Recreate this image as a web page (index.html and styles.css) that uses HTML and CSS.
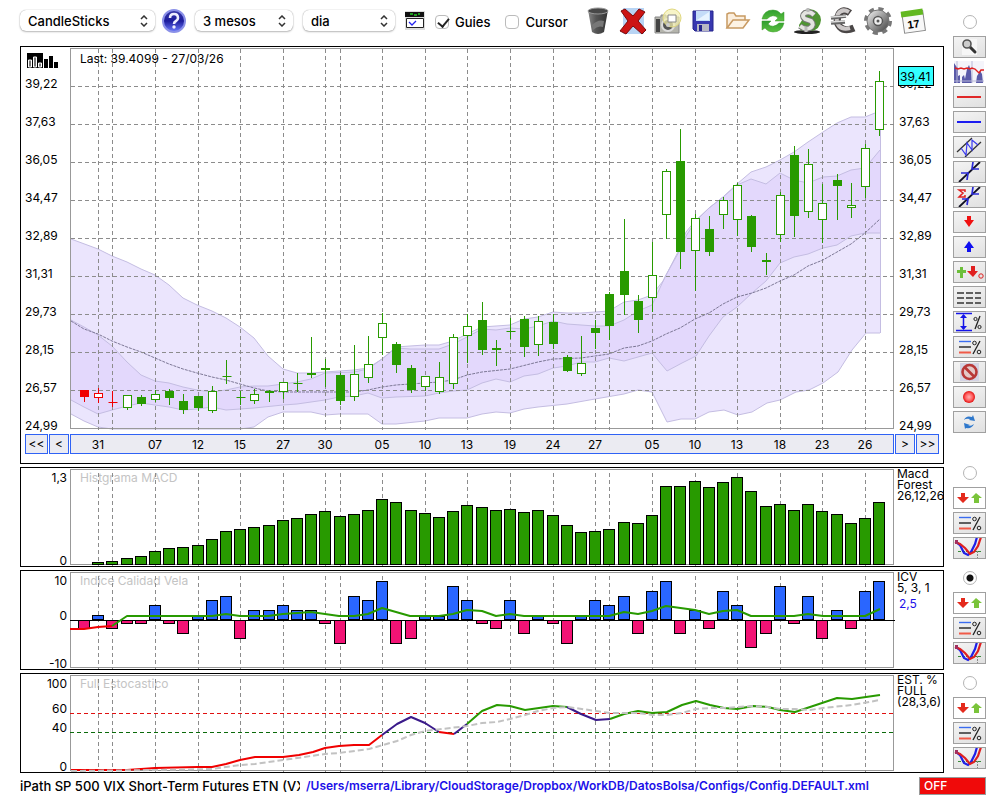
FILE: index.html
```
<!DOCTYPE html>
<html lang="ca">
<head>
    <meta charset="UTF-8">
    <meta name="viewport" content="width=device-width, initial-scale=1.0">
    <title>iPath SP 500 VIX</title>
    <link rel="stylesheet" href="styles.css">
</head>
<body>

<!-- icons -->
<svg class="defs" aria-hidden="true">
    <defs>
        <linearGradient id="g-blue" x1="0" y1="0" x2="0" y2="1">
            <stop offset="0" stop-color="#3a3aa8"/><stop offset=".5" stop-color="#1c1c9c"/><stop offset="1" stop-color="#6f7dff"/>
        </linearGradient>
        <linearGradient id="g-dark" x1="0" y1="0" x2="1" y2="0">
            <stop offset="0" stop-color="#888"/><stop offset=".4" stop-color="#555"/><stop offset="1" stop-color="#333"/>
        </linearGradient>
        <linearGradient id="g-metal" x1="0" y1="0" x2="1" y2="1">
            <stop offset="0" stop-color="#ddd"/><stop offset=".5" stop-color="#999"/><stop offset="1" stop-color="#555"/>
        </linearGradient>
        <linearGradient id="g-green" x1="0" y1="0" x2="0" y2="1">
            <stop offset="0" stop-color="#2f9e2f"/><stop offset="1" stop-color="#5cc040"/>
        </linearGradient>
        <radialGradient id="g-red">
            <stop offset="0" stop-color="#ffb0b0"/><stop offset=".6" stop-color="#ff6060"/><stop offset="1" stop-color="#e01010"/>
        </radialGradient>
        <symbol id="i-zoom" viewBox="0 0 31 20">
            <path d="M8 2h15v16H8z" fill="#f6f6f6"/>
            <path d="M16 10l5 5" stroke="#333" stroke-width="3" stroke-linecap="round"/>
            <circle cx="13" cy="7" r="4" fill="#ccc" stroke="#555" stroke-width="1.6"/>
        </symbol>
        <symbol id="i-hist" viewBox="0 0 31 22">
            <path d="M0 0h30v22H0z" fill="#f4f4fa"/>
            <path d="M0 22V2l2 3 2 2v8l2-1v8zM8 22v-6l2-2 1 4 2-10 2-4 2 6 1 12zM22 22l1-7 2-3 1-2 2 3 1 9z" fill="#5a5aa8"/>
            <path d="M3 0v22M18 0v22M0 20h30" stroke="#b8b8d8"/>
            <path d="M1 7l3 1 3-1 3 1 3-1 3 1 2-1 3 1 2 2 2 2 2-3 3 0" fill="none" stroke="#e02020" stroke-width="1.4"/>
        </symbol>
        <symbol id="i-redline" viewBox="0 0 31 20"><path d="M3 10h24" stroke="#e02828" stroke-width="2"/></symbol>
        <symbol id="i-blueline" viewBox="0 0 31 20"><path d="M3 10h24" stroke="#1c1cf0" stroke-width="2"/></symbol>
        <symbol id="i-channel" viewBox="0 0 31 20">
            <path d="M3 15L18 1M11 20L27 5" stroke="#333" stroke-width="1.3"/>
            <path d="M7 11l5 7 1-12 5 7 0-10 6 5" fill="none" stroke="#3a3af0" stroke-width="1.2"/>
        </symbol>
        <symbol id="i-cross" viewBox="0 0 31 20">
            <path d="M5 20L26 0" stroke="#112" stroke-width="1.8"/>
            <path d="M7 11l7 0-1 7M25 7l-7 0 1-7" fill="none" stroke="#2a2ad8" stroke-width="1.700"/>
        </symbol>
        <symbol id="i-sigma" viewBox="0 0 31 20">
            <path d="M5 20L26 0" stroke="#112" stroke-width="1.8"/>
            <path d="M8 12l6 0-1 6M25 7l-7 0 1-7" fill="none" stroke="#2a2ad8" stroke-width="1.700"/>
            <path d="M11 5V3H5l4 3-4 4h6V8" fill="none" stroke="#e02020" stroke-width="1.5"/>
        </symbol>
        <symbol id="i-down" viewBox="0 0 31 20"><path d="M13 4h4v4h3l-5 7-5-7h3z" fill="#f01010"/></symbol>
        <symbol id="i-up" viewBox="0 0 31 20"><path d="M13 15h4v-4h3l-5-7-5 7h3z" fill="#1010f0"/></symbol>
        <symbol id="i-add" viewBox="0 0 31 20">
            <path d="M6 5h3v3h3v3H9v5H6v-5H3V8h3z" fill="#6cbf3a"/>
            <path d="M17 4h4v5h3l-5 6-6-6h4z" fill="#e02020"/>
            <circle cx="27" cy="14" r="2.2" fill="none" stroke="#e02020"/>
        </symbol>
        <symbol id="i-dashes" viewBox="0 0 31 20">
            <path d="M3 6h7M12 6h7M21 6h6M3 11h7M12 11h7M21 11h6M3 16h7M12 16h7M21 16h6" stroke="#333" stroke-width="1.6"/>
        </symbol>
        <symbol id="i-range" viewBox="0 0 31 20">
            <path d="M2 1.500h16M2 18.500h16M9.500 3v14" stroke="#1414e8" stroke-width="1.5"/>
            <path d="M6 6l3.500-4L13 6zM6 14l3.500 4 3.500-4z" fill="#1414e8"/>
            <path d="M26 4l-5 13" stroke="#222" stroke-width="1.3"/>
            <circle cx="21.500" cy="7" r="1.600" fill="none" stroke="#222"/><circle cx="25.500" cy="15" r="1.600" fill="none" stroke="#222"/>
        </symbol>
        <symbol id="i-levels" viewBox="0 0 31 20">
            <path d="M5 4.500h12" stroke="#3a6cf0" stroke-width="1.4"/>
            <path d="M5 10h12" stroke="#222" stroke-width="1.4"/>
            <path d="M5 15.500h12" stroke="#f05a48" stroke-width="2"/>
            <path d="M26 4l-7 13" stroke="#222" stroke-width="1.3"/>
            <circle cx="20.500" cy="6" r="1.800" fill="none" stroke="#222"/><circle cx="25" cy="15" r="1.800" fill="none" stroke="#222"/>
        </symbol>
        <symbol id="i-forbid" viewBox="0 0 31 20">
            <path d="M6 1h19v18H6z" fill="#d4d4e4"/>
            <circle cx="15.500" cy="10" r="7" fill="#e4c8c8" stroke="#b83838" stroke-width="2.600"/>
            <path d="M10.500 5l10 10" stroke="#b83838" stroke-width="2.600"/>
        </symbol>
        <symbol id="i-record" viewBox="0 0 31 20"><circle cx="15" cy="10" r="6" fill="url(#g-red)"/></symbol>
        <symbol id="i-sync" viewBox="0 0 31 20">
            <path d="M10 8q2-5 8-3l1-2 2 6-6-1 1-1q-4-1-6 1zM20 12q-2 5-8 4l-1 1-1-6 6 2-2 1q4 0 6-2z" fill="#2f78cc"/>
        </symbol>
        <symbol id="i-downup" viewBox="0 0 31 20">
            <path d="M7 5h4v4h4l-6 6-6-6h4z" fill="#e42a1c"/>
            <path d="M20 15h5v-5h3l-6-5-5 5h3z" fill="#7ac43a"/>
        </symbol>
        <symbol id="i-vcurve" viewBox="0 0 31 20">
            <path d="M4 13.500h24" stroke="#3a8a3a" stroke-dasharray="3 1"/>
            <path d="M23.500 13v7" stroke="#888" stroke-dasharray="2 1"/>
            <path d="M2 4l4 3 4 8 4 2 3-3 4-8 2-7" fill="none" stroke="#2020e8" stroke-width="2.200"/>
            <path d="M1 4l5 2 5 4 5 6 4-2 4-6 3-9" fill="none" stroke="#e02020" stroke-width="2.200"/>
            <path d="M1 2h3v4H1z" fill="#a03060"/>
        </symbol>
    </defs>
</svg>

<main class="page">
    <form class="toolbar" id="toolbar">
        <label class="pick pick-type">
            <select name="type" aria-label="Tipus"><option>CandleSticks</option></select>
            <svg viewBox="0 0 8 12"><path d="M1 4l3-3 3 3M1 8l3 3 3-3"/></svg>
        </label>
        <button type="button" class="icon help" aria-label="Ajuda">
            <svg viewBox="0 0 24 24">
                <circle cx="12" cy="12" r="11" fill="url(#g-blue)" stroke="#8a90e8" stroke-width="2"/>
                <path d="M8 9q0-4 4-4t4 4q0 2-2 3t-2 3" fill="none" stroke="#eef" stroke-width="2.600"/>
                <circle cx="12" cy="18" r="1.700" fill="#eef"/>
            </svg>
        </button>
        <label class="pick pick-range">
            <select name="range" aria-label="Periode"><option>3 mesos</option></select>
            <svg viewBox="0 0 8 12"><path d="M1 4l3-3 3 3M1 8l3 3 3-3"/></svg>
        </label>
        <label class="pick pick-unit">
            <select name="unit" aria-label="Unitat"><option>dia</option></select>
            <svg viewBox="0 0 8 12"><path d="M1 4l3-3 3 3M1 8l3 3 3-3"/></svg>
        </label>
        <button type="button" class="icon console" aria-label="Play">
            <svg viewBox="0 0 20 20">
                <path d="M0 0h20v19H0z" fill="#ddd"/>
                <path d="M0 1h19v5H0z" fill="#111"/>
                <path d="M5 3h3M9 4h3M13 3h2" stroke="#2c2" stroke-width="1.500"/>
                <path d="M1.500 7.500h17v9h-17z" fill="#fff" stroke="#222"/>
                <path d="M4 11l3 3 4-4" fill="none" stroke="#22e" stroke-width="1.300"/>
            </svg>
        </button>
        <label class="check"><input type="checkbox" name="guides" checked> Guies</label>
        <label class="check"><input type="checkbox" name="cursor"> Cursor</label>
        <div class="actions">
            <button type="button" class="icon" aria-label="Paperera">
                <svg viewBox="0 0 28 28">
                    <path d="M4 3l4 22q6 4 12 0l4-22z" fill="url(#g-dark)"/>
                    <ellipse cx="14" cy="4" rx="10" ry="3" fill="#484848" stroke="#999"/>
                    <path d="M8 18q6-6 12-4l-1 6q-5-2-10 3z" fill="#777"/>
                </svg>
            </button>
            <button type="button" class="icon" aria-label="Esborrar">
                <svg viewBox="0 0 28 28">
                    <path d="M4 1h21v26H4z" fill="#b8d4f4"/>
                    <path d="M2 4l4-2 8 7 6-7 6 3-7 9 8 9-4 4-9-8-7 8-6-3 8-10z" fill="#cc1414" stroke="#7c0a0a"/>
                </svg>
            </button>
            <button type="button" class="icon" aria-label="Captura">
                <svg viewBox="0 0 28 28">
                    <path d="M1 10h6V8h5v2h13v16H1z" fill="#b4b4ac" stroke="#888"/>
                    <path d="M2 12h4v13H2z" fill="#444"/>
                    <circle cx="14" cy="18" r="6" fill="#555" stroke="#ddd" stroke-width="2"/>
                    <circle cx="18" cy="11" r="9" fill="#f4f0b0" fill-opacity=".7" stroke="#e0d880"/>
                    <path d="M14 8h8v7h-8z" fill="#fff" stroke="#888"/>
                    <circle cx="14" cy="18" r="2" fill="#ccc"/>
                </svg>
            </button>
            <button type="button" class="icon" aria-label="Desar">
                <svg viewBox="0 0 28 28">
                    <path d="M4 4h20v20H6l-2-2z" fill="#3838b0" stroke="#24248c"/>
                    <path d="M7 4h14v10H7z" fill="#c4dcf8"/>
                    <path d="M8 13L20 5v8z" fill="#e8f4ff"/>
                    <path d="M8 17h12v7H8z" fill="#b8b8c4"/>
                    <path d="M10 18h3v6h-3z" fill="#24248c"/>
                </svg>
            </button>
            <button type="button" class="icon" aria-label="Obrir">
                <svg viewBox="0 0 28 28">
                    <path d="M3 21V7l2-1h5l2 3h9v4" fill="#fbeedd" stroke="#c89a62" stroke-width="1.500"/>
                    <path d="M3 21l6-8h16l-6 8z" fill="#fdf3e4" stroke="#c89a62" stroke-width="1.500"/>
                </svg>
            </button>
            <button type="button" class="icon" aria-label="Refrescar">
                <svg viewBox="0 0 28 28">
                    <path d="M3 12q2-9 11-9 5 0 8 4l3-2v9h-9l3-3q-5-5-11 1z" fill="url(#g-green)" stroke="#3a9a2a" stroke-width=".5"/>
                    <path d="M25 16q-2 9-11 9-5 0-8-4l-3 2v-9h9l-3 3q5 5 11-1z" fill="url(#g-green)" stroke="#3a9a2a" stroke-width=".5"/>
                </svg>
            </button>
            <button type="button" class="icon" aria-label="Dolar">
                <svg viewBox="0 0 28 28">
                    <ellipse cx="13" cy="25" rx="13" ry="2" fill="#222"/>
                    <path d="M15 2q11 1 12 11-1 10-10 11H8q-3-2-3-6z" fill="#4f9432"/>
                    <path d="M20 8q-4-4-9-2-4 3 0 6l6 2q4 4-1 7-5 2-10-2" fill="none" stroke="#777" stroke-width="6"/>
                    <path d="M20 8q-4-4-9-2-4 3 0 6l6 2q4 4-1 7-5 2-10-2" fill="none" stroke="#e4e4e0" stroke-width="4"/>
                    <path d="M14 1v4M12 20v5" stroke="#bbb" stroke-width="3"/>
                </svg>
            </button>
            <button type="button" class="icon" aria-label="Euro">
                <svg viewBox="0 0 28 28">
                    <path d="M21 6q-7-5-11 1-4 8 1 13 5 5 14 1" fill="none" stroke="#4a4646" stroke-width="7"/>
                    <path d="M20 5q-7-4-11 2-3 7 1 12 4 4 11 2" fill="none" stroke="#ccc8c8" stroke-width="4"/>
                    <path d="M2 11l15-2M2 16l14-1" stroke="#666" stroke-width="3.500"/>
                    <path d="M2 10l15-1M2 15l14-1" stroke="#ddd" stroke-width="1.500"/>
                </svg>
            </button>
            <button type="button" class="icon" aria-label="Configurar">
                <svg viewBox="0 0 28 28">
                    <circle cx="14" cy="14" r="12" fill="none" stroke="#777" stroke-width="4" stroke-dasharray="5 4.420"/>
                    <circle cx="14" cy="14" r="8" fill="none" stroke="url(#g-metal)" stroke-width="6"/>
                    <circle cx="14" cy="14" r="11" fill="none" stroke="#777"/>
                    <circle cx="14" cy="14" r="4.500" fill="#eee" stroke="#555" stroke-width="1.500"/>
                    <circle cx="14" cy="14" r="1.500" fill="#555"/>
                </svg>
            </button>
            <button type="button" class="icon" aria-label="Calendari">
                <svg viewBox="0 0 28 28">
                    <g transform="rotate(-8 14 14)">
                        <path d="M4 5h21v20H4z" fill="#f8f8f8" stroke="#888"/>
                        <path d="M3 3h22v6H3z" fill="#62b820"/>
                        <text x="14" y="21" class="cal">17</text>
                    </g>
                </svg>
            </button>
        </div>
    </form>

    <section class="panel panel-price">
        <svg id="price" class="chart" viewBox="21 47 922 386"></svg>
        <div class="dates">
            <button type="button" class="wide">&lt;&lt;</button>
            <button type="button">&lt;</button>
            <div class="strip"><svg id="dates" class="chart" viewBox="71 0 822 18"></svg></div>
            <button type="button">&gt;</button>
            <button type="button" class="wide">&gt;&gt;</button>
        </div>
    </section>
    <section class="panel"><svg id="macd" class="chart" viewBox="21 468 922 98"></svg></section>
    <section class="panel"><svg id="icv" class="chart" viewBox="21 571 922 98"></svg></section>
    <section class="panel"><svg id="stoch" class="chart" viewBox="21 674 922 98"></svg></section>

    <aside class="side">
        <div class="tools tools-price">
            <input type="radio" name="panel" aria-label="Preu">
            <button type="button" aria-label="Lupa"><svg><use href="#i-zoom"/></svg></button>
            <button type="button" class="flat" aria-label="Histograma"><svg><use href="#i-hist"/></svg></button>
            <button type="button" aria-label="Linia vermella"><svg><use href="#i-redline"/></svg></button>
            <button type="button" aria-label="Linia blava"><svg><use href="#i-blueline"/></svg></button>
            <button type="button" aria-label="Canal"><svg><use href="#i-channel"/></svg></button>
            <button type="button" aria-label="Creuament"><svg><use href="#i-cross"/></svg></button>
            <button type="button" aria-label="Sumatori"><svg><use href="#i-sigma"/></svg></button>
            <button type="button" aria-label="Avall"><svg><use href="#i-down"/></svg></button>
            <button type="button" aria-label="Amunt"><svg><use href="#i-up"/></svg></button>
            <button type="button" aria-label="Afegir"><svg><use href="#i-add"/></svg></button>
            <button type="button" aria-label="Graella"><svg><use href="#i-dashes"/></svg></button>
            <button type="button" aria-label="Rang"><svg><use href="#i-range"/></svg></button>
            <button type="button" aria-label="Nivells"><svg><use href="#i-levels"/></svg></button>
            <button type="button" aria-label="Treure"><svg><use href="#i-forbid"/></svg></button>
            <button type="button" aria-label="Gravar"><svg><use href="#i-record"/></svg></button>
            <button type="button" aria-label="Sincronitzar"><svg><use href="#i-sync"/></svg></button>
        </div>
        <div class="tools">
            <input type="radio" name="panel" aria-label="MACD">
            <button type="button" class="white" aria-label="Moure"><svg><use href="#i-downup"/></svg></button>
            <button type="button" aria-label="Nivells"><svg><use href="#i-levels"/></svg></button>
            <button type="button" aria-label="Corba"><svg><use href="#i-vcurve"/></svg></button>
        </div>
        <div class="tools">
            <input type="radio" name="panel" aria-label="ICV" checked>
            <button type="button" class="white" aria-label="Moure"><svg><use href="#i-downup"/></svg></button>
            <button type="button" aria-label="Nivells"><svg><use href="#i-levels"/></svg></button>
            <button type="button" aria-label="Corba"><svg><use href="#i-vcurve"/></svg></button>
        </div>
        <div class="tools">
            <input type="radio" name="panel" aria-label="Estocastic">
            <button type="button" class="white" aria-label="Moure"><svg><use href="#i-downup"/></svg></button>
            <button type="button" aria-label="Nivells"><svg><use href="#i-levels"/></svg></button>
            <button type="button" aria-label="Corba"><svg><use href="#i-vcurve"/></svg></button>
        </div>
    </aside>

    <footer class="status">
        <span class="name">iPath SP 500 VIX Short-Term Futures ETN (VXX)</span>
        <a href="#">/Users/mserra/Library/CloudStorage/Dropbox/WorkDB/DatosBolsa/Configs/Config.DEFAULT.xml</a>
        <span class="off">OFF</span>
    </footer>
</main>

<script src="chart.js"></script>
</body>
</html>
```
FILE: styles.css
```
* {
    box-sizing: border-box;
}

body {
    margin: 0;
    background: #fff;
    color: #000;
    font-family: Inter, "Liberation Sans", sans-serif;
    font-size: 13px;
}

.defs {
    position: absolute;
    width: 0;
    height: 0;
}

.page {
    display: grid;
    grid-template-columns: 1fr 33px;
    grid-template-rows: 43px auto auto auto auto auto;
    column-gap: 9px;
    row-gap: 3px;
    padding: 0 14px 0 20px;
}

/* toolbar */
.toolbar {
    display: flex;
    align-items: center;
    padding-bottom: 2px;
    font-weight: 500;
}

.pick {
    position: relative;
    height: 21px;
    margin-right: 10px;
}

.pick select {
    appearance: none;
    width: 100%;
    height: 21px;
    padding: 0 8px;
    border: 0;
    border-radius: 6px;
    background: #fff;
    box-shadow: 0 0 1px rgba(0, 0, 0, .4), 0 1px 2px rgba(0, 0, 0, .25);
    color: #000;
    font: inherit;
}

.pick svg {
    position: absolute;
    right: 7px;
    top: 5px;
    width: 8px;
    height: 12px;
    fill: none;
    stroke: #333;
    stroke-width: 1.5;
    pointer-events: none;
}

.pick-type {
    width: 135px;
    margin-right: 7px;
}

.pick-range {
    width: 98px;
}

.pick-unit {
    width: 92px;
}

.icon {
    display: flex;
    align-items: center;
    justify-content: center;
    padding: 0;
    border: 0;
    background: none;
}

.icon svg {
    width: 28px;
    height: 28px;
}

.help {
    margin-right: 9px;
}

.help svg {
    width: 24px;
    height: 24px;
}

.console svg {
    width: 20px;
    height: 20px;
}

.check {
    display: flex;
    align-items: center;
    gap: 6px;
    margin-left: 10px;
    padding-top: 2px;
}

.check + .check {
    margin-left: 15px;
}

.check input {
    appearance: none;
    width: 14px;
    height: 14px;
    margin: 0;
    border: 1px solid #bbb;
    border-radius: 4px;
    background: #fff;
}

.check input:checked::before {
    content: "";
    display: block;
    width: 5px;
    height: 9px;
    margin: 0 0 0 4px;
    border: solid #222;
    border-width: 0 2px 2px 0;
    transform: rotate(40deg);
}

.actions {
    display: grid;
    grid-template-columns: repeat(10, 35px);
    margin-left: auto;
    margin-right: 14px;
}

.cal {
    font-size: 11px;
    font-weight: 700;
    text-anchor: middle;
}

/* chart panels */
.panel {
    grid-column: 1;
    border: 1px solid #000;
}

.panel-price {
    padding-bottom: 9px;
}

.chart {
    display: block;
    width: 100%;
    font-size: 12px;
}

.dates {
    display: flex;
    gap: 1px;
    margin-top: 1px;
    padding: 0 4px;
}

.dates button,
.strip {
    height: 20px;
    padding: 0;
    border: 1px solid #2f62f5;
    background: #ebebf2;
    color: #000;
}

.dates button {
    width: 20px;
    font-family: inherit;
    font-size: 12px;
    line-height: 16px;
}

.dates .wide {
    width: 23px;
}

.strip {
    flex: 1;
}

.frame {
    fill: none;
    stroke: #999;
}

.grid {
    fill: none;
    stroke: #8c8c8c;
    stroke-dasharray: 4 3;
}

.band {
    fill: rgba(120, 80, 240, .15);
}

.band-inner {
    fill: rgba(150, 90, 240, .09);
}

.band-line {
    fill: none;
    stroke: #c4bde2;
}

.mean {
    fill: none;
    stroke: #7d7896;
    stroke-dasharray: 3 1;
}

.candle {
    stroke: #289a00;
}

.candle.red {
    stroke: #f00000;
}

.candle .full {
    fill: #289a00;
}

.candle.red .full {
    fill: #f00000;
}

.candle .hollow {
    fill: #fff;
}

.bar {
    fill: #289a00;
    stroke: #000;
}

.bar.pos {
    fill: #2a66ff;
}

.bar.neg {
    fill: #f21375;
}

.axis {
    stroke: #000;
}

.line {
    fill: none;
    stroke-width: 2;
    stroke-linejoin: round;
}

.line.up {
    stroke: #289a00;
}

.line.down {
    stroke: #f00000;
}

.line.mid {
    stroke: #3a1a8a;
}

.line.signal {
    stroke: #c2c2c2;
    stroke-dasharray: 6 3;
}

.level {
    stroke: #e01010;
    stroke-dasharray: 4 3;
}

.level.low {
    stroke: #0b6b0b;
}

.end {
    text-anchor: end;
}

.middle {
    text-anchor: middle;
}

.title {
    fill: #c4c4c4;
}

.value {
    fill: #1c10e8;
}

.badge {
    fill: #3ff;
    stroke: #000;
}

/* side tools */
.side {
    grid-column: 2;
    grid-row: 1 / span 5;
    padding-top: 15px;
}

.tools {
    display: grid;
    gap: 3px;
    margin-bottom: 12px;
}

.tools-price {
    margin-bottom: 33px;
}

.tools:last-child {
    margin-bottom: 0;
}

.tools input {
    appearance: none;
    width: 14px;
    height: 14px;
    margin: 0 auto 4px;
    border: 1px solid #b4b4b4;
    border-radius: 50%;
    background: #fff;
}

.tools input:checked {
    background: radial-gradient(circle, #111 3px, #fff 4px);
}

.tools button {
    height: 22px;
    padding: 0;
    border: 1px solid #a0a0a0;
    background: linear-gradient(160deg, #f4f4f4, #e0e0e0);
}

.tools svg {
    display: block;
    width: 31px;
    height: 20px;
}

.tools .flat {
    border: 0;
    background: none;
}

.tools .flat svg {
    width: 33px;
    height: 22px;
}

.tools .white {
    background: #fff;
}

/* footer */
.status {
    grid-column: 1 / -1;
    display: flex;
    align-items: center;
    height: 19px;
    font-weight: 500;
    white-space: nowrap;
}

.status .name {
    width: 280px;
    overflow: hidden;
}

.status a {
    margin-left: 6px;
    color: #1c10e8;
    font-size: 12px;
    font-weight: 600;
    text-decoration: none;
}

.status .off {
    width: 67px;
    margin-left: auto;
    padding: 0 4px;
    border: 1px solid #999;
    background: #f00a0a;
    color: #fff;
    font-size: 12px;
    line-height: 16px;
}
```
FILE: chart.js
```
var x = function (i) { return Math.round(84 + 14.2 * i) + 0.5; };

// sessions that get a vertical guide, and the label of each one
var guides = [1, 2, 5, 8, 11, 14, 17, 18, 21, 24, 27, 30, 33, 36, 37, 40, 43, 46, 49, 52, 55];
var dates = {1: '31', 5: '07', 8: '12', 11: '15', 14: '27', 17: '30', 21: '05', 24: '10', 27: '13', 30: '19',
    33: '24', 36: '27', 40: '05', 43: '10', 46: '13', 49: '18', 52: '23', 55: '26'};
var prices = ['39,22', '37,63', '36,05', '34,47', '32,89', '31,31', '29,73', '28,15', '26,57', '24,99'];

// kind (F full, H hollow, C cross), high, body top, body bottom, low
var candles = [
    ['F', 390, 390, 397, 402], ['H', 388, 393, 398, 403], ['C', 391, 402, 402, 407], ['H', 395, 395, 408, 410],
    ['F', 395, 397, 404, 406], ['H', 390, 394, 400, 402], ['F', 389, 391, 398, 405], ['F', 394, 401, 410, 414],
    ['F', 396, 396, 408, 411], ['H', 386, 391, 411, 413], ['C', 360, 376, 376, 384], ['C', 391, 397, 397, 405],
    ['H', 389, 394, 401, 404], ['F', 390, 391, 392, 402], ['H', 382, 382, 392, 399], ['C', 373, 383, 383, 392],
    ['F', 337, 373, 374, 378], ['F', 359, 368, 369, 387], ['F', 373, 375, 401, 405], ['H', 345, 374, 397, 401],
    ['H', 336, 364, 378, 383], ['H', 313, 323, 338, 355], ['F', 342, 344, 365, 373], ['F', 365, 368, 390, 393],
    ['H', 376, 376, 387, 391], ['H', 362, 377, 392, 394], ['H', 334, 337, 384, 389], ['H', 314, 326, 336, 363],
    ['F', 302, 320, 350, 355], ['F', 340, 348, 349, 366], ['C', 318, 331, 331, 339], ['F', 316, 319, 347, 357],
    ['H', 316, 321, 345, 356], ['F', 314, 322, 344, 349], ['F', 355, 357, 371, 372], ['H', 336, 363, 374, 376],
    ['F', 320, 328, 333, 349], ['F', 292, 294, 326, 340], ['F', 219, 271, 295, 315], ['F', 295, 301, 320, 333],
    ['H', 242, 275, 298, 312], ['H', 169, 171, 215, 239], ['F', 129, 161, 252, 269], ['H', 214, 218, 251, 291],
    ['F', 216, 229, 252, 256], ['H', 197, 200, 215, 229], ['H', 183, 185, 220, 236], ['F', 215, 216, 247, 252],
    ['F', 253, 260, 261, 275], ['H', 192, 195, 235, 242], ['F', 146, 155, 216, 237], ['H', 149, 164, 212, 218],
    ['H', 184, 203, 220, 243], ['F', 174, 180, 186, 220], ['H', 183, 205, 208, 218], ['H', 144, 148, 187, 198],
    ['H', 71, 81, 130, 136]
];

var outerTop = '71,239 98,249 112,256 127,262 141,269 155,275 169,285 183,298 197,305 212,311 226,318 240,327 254,338 268,356 283,369 297,373 311,373 325,372 339,371 354,370 368,368 382,359 396,347 410,346 425,345 439,345 453,341 467,334 482,327 496,326 510,325 524,319 538,317 553,312 567,313 581,313 595,312 609,311 624,302 638,300 652,295 663,281 680,248 686,232 695,221 709,208 723,197 737,184 751,172 766,167 780,160 794,152 808,142 823,132 837,123 851,117 865,117 880,111';
var outerBottom = '71,414 84,421 98,427 112,429 240,429 254,427 268,417 283,412 311,412 325,415 339,414 368,414 382,424 396,424 425,421 439,418 467,418 482,414 496,412 510,413 524,409 538,407 567,404 595,399 624,394 638,390 652,392 667,422 681,419 695,419 709,412 724,410 738,415 752,412 767,403 780,400 796,392 809,390 823,383 838,372 852,350 866,333 880,333';
var innerTop = '71,320 84,327 98,335 112,346 127,362 141,375 155,381 169,383 183,387 197,390 212,392 226,390 240,387 254,386 268,386 283,384 297,382 311,379 325,373 354,372 368,369 382,359 396,348 410,349 439,349 453,344 467,337 482,329 496,330 510,328 524,329 538,326 553,321 567,324 581,325 595,326 609,326 624,320 638,311 652,305 666,275 680,250 686,236 695,222 709,208 723,197 737,185 751,179 766,184 780,173 794,180 808,183 823,177 837,176 851,170 865,168 880,150';
var innerBottom = '71,400 84,407 98,414 112,410 127,406 141,403 155,405 169,407 183,410 197,409 212,407 226,410 240,409 254,408 283,405 297,404 325,400 339,397 354,396 368,393 382,398 396,397 425,396 439,393 453,391 467,390 482,383 496,379 510,382 524,376 538,374 553,368 567,366 581,362 595,362 609,358 624,361 638,357 652,353 667,371 682,363 696,356 709,336 723,317 737,307 752,293 766,281 780,263 794,257 808,254 823,248 837,245 851,236 865,233 880,233';
var mean = '71,321 84,329 98,334 112,341 127,347 141,352 155,358 169,364 183,369 197,373 212,377 226,380 240,384 254,388 268,391 283,392 354,392 368,390 382,387 396,385 410,384 439,382 453,380 467,375 482,372 510,369 538,362 553,359 581,358 609,354 624,348 638,346 652,341 666,334 680,328 695,319 709,313 723,304 737,297 752,293 766,288 780,281 794,275 808,266 823,260 837,252 851,244 865,233 880,219';

// top of each histogram bar
var macd = [564, 562, 561, 558, 556, 551, 548, 547, 545, 539, 531, 529, 527, 525, 520, 518, 514, 511, 516, 514,
    510, 499, 502, 510, 513, 517, 511, 505, 507, 510, 509, 512, 510, 515, 525, 532, 531, 529, 522, 523, 515,
    486, 486, 481, 487, 482, 477, 491, 506, 504, 510, 504, 511, 514, 523, 518, 502];

var icv = [-8, 5, -8, -3, -3, 15, -3, -13, 4, 20, 24, -18, 10, 10, 15, 10, 10, -3, -23, 24, 20, 39, -23, -18, 4, 4,
    34, 20, -3, -8, 20, -13, 4, -3, -23, 4, 20, 15, 24, -13, 29, 39, -13, 10, -8, 29, 15, -27, -13, 34, -3, 24,
    -18, 10, -8, 29, 39];

function path(d, cls) {
    return '<path class="' + cls + '" d="' + d + '"/>';
}

function poly(points, cls) {
    return '<polyline class="' + cls + '" points="' + points + '"/>';
}

function text(tx, ty, label, cls) {
    return '<text x="' + tx + '" y="' + ty + '" class="' + (cls || '') + '">' + label + '</text>';
}

function rect(rx, ry, w, h, cls) {
    return '<rect x="' + rx + '" y="' + ry + '" width="' + w + '" height="' + h + '" class="' + cls + '"/>';
}

function verticals(top, bottom) {
    return guides.map(function (i) {
        return path('M' + x(i) + ' ' + top + 'V' + bottom, 'grid');
    }).join('');
}

function reversed(points) {
    return points.split(' ').reverse().join(' ');
}

function draw(id, parts) {
    document.getElementById(id).innerHTML = parts.join('');
}

function drawPrice() {
    var out = [];
    out.push('<polygon class="band" points="' + outerTop + ' ' + reversed(outerBottom) + '"/>');
    out.push('<polygon class="band-inner" points="' + innerTop + ' ' + reversed(innerBottom) + '"/>');
    [outerTop, outerBottom, innerTop, innerBottom].forEach(function (p) {
        out.push(poly(p, 'band-line'));
    });
    out.push(path('M880.5 111V333', 'band-line'));
    out.push(rect(70.5, 48.5, 823, 380, 'frame'));
    out.push(verticals(49, 430));
    out.push(poly(mean, 'mean'));
    prices.forEach(function (p, i) {
        var y = 86.5 + 38 * i;
        if (i < 9) {
            out.push(path('M71 ' + y + 'H896', 'grid'));
        }
        out.push(text(25, y + 1.5, p));
        out.push(text(899, y + 1.5, p));
    });
    candles.forEach(function (c, i) {
        var cx = x(i);
        out.push('<g class="candle' + (i < 3 ? ' red' : '') + '">');
        out.push(path('M' + cx + ' ' + c[1] + 'V' + c[4], ''));
        if (c[0] === 'C') {
            out.push(path('M' + (cx - 4) + ' ' + (c[2] + 0.5) + 'h9', ''));
        } else {
            out.push(rect(cx - 4, c[2] + 0.5, 8, Math.max(c[3] - c[2] - 1, 1), c[0] === 'F' ? 'full' : 'hollow'));
        }
        out.push('</g>');
    });
    out.push(rect(898.5, 66.5, 35, 19, 'badge'));
    out.push(text(900, 81, '39,41'));
    out.push(text(80, 63, 'Last: 39.4099 - 27/03/26'));
    // bars logo
    out.push(path('M27 53h16v15H27z', ''));
    out.push('<path d="M28.500 60h3v7h-3zM33.500 57h3v10h-3zM38.500 63h3v4h-3z" fill="#777" stroke="#fff"/>');
    out.push(path('M44 59h4v9h-4zM49 56h4v12h-4zM54 62h4v6h-4z', ''));
    draw('price', out);

    draw('dates', Object.keys(dates).map(function (i) {
        return text(x(+i) - 0.5, 14, dates[i], 'middle');
    }));
}

function drawMacd() {
    var out = [text(80, 482, 'Histgrama MACD', 'title'), rect(70.5, 469.5, 823, 95, 'frame'), verticals(473, 566)];
    macd.forEach(function (top, i) {
        out.push(rect(x(i) - 6, top + 0.5, 11, 564 - top, 'bar'));
    });
    out.push(text(67, 482, '1,3', 'end'), text(67, 565, '0', 'end'));
    out.push(text(897, 478, 'Macd'), text(897, 489, 'Forest'), text(897, 500, '26,12,26'));
    draw('macd', out);
}

function drawIcv() {
    var out = [text(80, 585, 'Indice Calidad Vela', 'title'), rect(70.5, 572.5, 823, 95, 'frame'), verticals(576, 669)];
    icv.forEach(function (v, i) {
        out.push(rect(x(i) - 6, v > 0 ? 620.5 - v : 620.5, 11, v > 0 ? v - 1 : -v, v > 0 ? 'bar pos' : 'bar neg'));
    });
    out.push(path('M70 620.5H895', 'axis'));
    out.push(poly('70,629 84,629 98,627 112,626', 'line down'));
    out.push(poly('112,626 127,616 212,616 226,614 240,616 268,616 283,614 297,613 311,612 325,614 339,616 354,616 368,614 382,608 396,612 410,616 439,616 453,614 467,610 482,611 496,616 510,614 524,616 609,616 624,612 638,614 652,611 666,606 695,610 709,614 723,611 737,610 751,616 794,616 808,614 823,616 865,616 880,609', 'line up'));
    out.push(text(67, 585, '10', 'end'), text(67, 620, '0', 'end'), text(67, 668, '-10', 'end'));
    out.push(text(897, 581, 'ICV'), text(897, 592, '5, 3, 1'), text(899, 608, '2,5', 'value'));
    draw('icv', out);
}

function drawStoch() {
    var out = [text(80, 688, 'Full Estocastico', 'title'), rect(70.5, 675.5, 823, 95, 'frame'), verticals(679, 772)];
    out.push(path('M70 713.5H895', 'level'), path('M70 732.5H895', 'level low'));
    out.push(poly('71,770 127,770 155,768 197,767 212,767 226,764 240,760 255,757 283,757 299,755 313,752 325,748 339,746 354,745 369,745 382,735', 'line down'));
    out.push(poly('382,735 397,724 411,717 425,723 439,732', 'line mid'));
    out.push(poly('439,732 454,734', 'line down'));
    out.push(poly('454,734 467,724', 'line mid'));
    out.push(poly('467,724 482,711 497,705 510,706 525,710 553,706 567,707', 'line up'));
    out.push(poly('567,707 581,714 596,720 610,719', 'line mid'));
    out.push(poly('610,719 624,714 638,711 652,713 667,712 682,705 696,701 710,705 724,708 737,709 753,706 768,707 780,710 795,712 810,707 837,698 852,699 880,695', 'line up'));
    out.push(poly('71,771 155,770 212,769 240,765 255,764 283,760 325,754 339,753 369,749 397,741 411,735 425,731 467,726 482,723 497,722 510,719 525,715 538,711 553,708 568,707 596,711 610,713 638,713 652,715 667,715 682,713 696,709 710,708 724,708 753,706 768,707 780,709 795,709 810,710 823,708 852,705 880,700', 'line signal'));
    out.push(text(67, 688, '100', 'end'), text(67, 713, '60', 'end'), text(67, 732, '40', 'end'), text(67, 771, '0', 'end'));
    out.push(text(897, 684, 'EST. %'), text(897, 695, 'FULL'), text(897, 706, '(28,3,6)'));
    draw('stoch', out);
}

drawPrice();
drawMacd();
drawIcv();
drawStoch();
```
